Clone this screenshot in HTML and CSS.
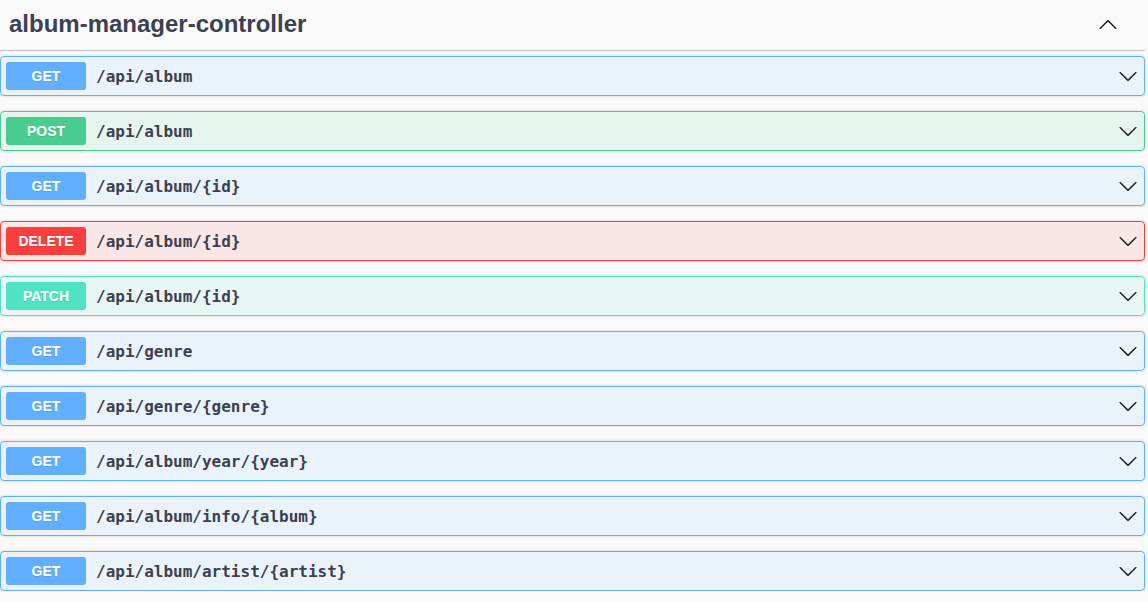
FILE: index.html
```html
<!DOCTYPE html>
<html>
<head>
<meta charset="utf-8">
<link rel="stylesheet" href="styles.css">
</head>
<body>
<div class="tag">
  <div class="tag-header">
    <h4 class="tag-title">album-manager-controller</h4>
    <svg class="tag-arrow" width="20" height="20" viewBox="0 0 20 20"><path d="M17.418 14.908c.272.268.709.268.979 0s.271-.701 0-.969l-7.908-7.83c-.27-.268-.707-.268-.979 0l-7.908 7.83c-.27.268-.27.701 0 .969.271.268.709.268.979 0L10 7.767l7.418 7.141z"/></svg>
  </div>
  <div class="ops">
    <div class="op get"><span class="method">GET</span><span class="path">/api/album</span><svg class="arrow" width="20" height="20" viewBox="0 0 20 20"><path d="M17.418 6.109c.272-.268.709-.268.979 0s.271.701 0 .969l-7.908 7.83c-.27.268-.707.268-.979 0l-7.908-7.83c-.27-.268-.27-.701 0-.969.271-.268.709-.268.979 0L10 13.25l7.418-7.141z"/></svg></div>
    <div class="op post"><span class="method">POST</span><span class="path">/api/album</span><svg class="arrow" width="20" height="20" viewBox="0 0 20 20"><path d="M17.418 6.109c.272-.268.709-.268.979 0s.271.701 0 .969l-7.908 7.83c-.27.268-.707.268-.979 0l-7.908-7.83c-.27-.268-.27-.701 0-.969.271-.268.709-.268.979 0L10 13.25l7.418-7.141z"/></svg></div>
    <div class="op get"><span class="method">GET</span><span class="path">/api/album/{id}</span><svg class="arrow" width="20" height="20" viewBox="0 0 20 20"><path d="M17.418 6.109c.272-.268.709-.268.979 0s.271.701 0 .969l-7.908 7.83c-.27.268-.707.268-.979 0l-7.908-7.830c-.27-.268-.27-.701 0-.969.271-.268.709-.268.979 0L10 13.25l7.418-7.141z"/></svg></div>
    <div class="op delete"><span class="method">DELETE</span><span class="path">/api/album/{id}</span><svg class="arrow" width="20" height="20" viewBox="0 0 20 20"><path d="M17.418 6.109c.272-.268.709-.268.979 0s.271.701 0 .969l-7.908 7.83c-.27.268-.707.268-.979 0l-7.908-7.83c-.27-.268-.27-.701 0-.969.271-.268.709-.268.979 0L10 13.25l7.418-7.141z"/></svg></div>
    <div class="op patch"><span class="method">PATCH</span><span class="path">/api/album/{id}</span><svg class="arrow" width="20" height="20" viewBox="0 0 20 20"><path d="M17.418 6.109c.272-.268.709-.268.979 0s.271.701 0 .969l-7.908 7.83c-.27.268-.707.268-.979 0l-7.908-7.83c-.27-.268-.27-.701 0-.969.271-.268.709-.268.979 0L10 13.25l7.418-7.141z"/></svg></div>
    <div class="op get"><span class="method">GET</span><span class="path">/api/genre</span><svg class="arrow" width="20" height="20" viewBox="0 0 20 20"><path d="M17.418 6.109c.272-.268.709-.268.979 0s.271.701 0 .969l-7.908 7.83c-.27.268-.707.268-.979 0l-7.908-7.83c-.27-.268-.27-.701 0-.969.271-.268.709-.268.979 0L10 13.25l7.418-7.141z"/></svg></div>
    <div class="op get"><span class="method">GET</span><span class="path">/api/genre/{genre}</span><svg class="arrow" width="20" height="20" viewBox="0 0 20 20"><path d="M17.418 6.109c.272-.268.709-.268.979 0s.271.701 0 .969l-7.908 7.83c-.27.268-.707.268-.979 0l-7.908-7.83c-.27-.268-.27-.701 0-.969.271-.268.709-.268.979 0L10 13.25l7.418-7.141z"/></svg></div>
    <div class="op get"><span class="method">GET</span><span class="path">/api/album/year/{year}</span><svg class="arrow" width="20" height="20" viewBox="0 0 20 20"><path d="M17.418 6.109c.272-.268.709-.268.979 0s.271.701 0 .969l-7.908 7.83c-.27.268-.707.268-.979 0l-7.908-7.83c-.27-.268-.27-.701 0-.969.271-.268.709-.268.979 0L10 13.25l7.418-7.141z"/></svg></div>
    <div class="op get"><span class="method">GET</span><span class="path">/api/album/info/{album}</span><svg class="arrow" width="20" height="20" viewBox="0 0 20 20"><path d="M17.418 6.109c.272-.268.709-.268.979 0s.271.701 0 .969l-7.908 7.83c-.27.268-.707.268-.979 0l-7.908-7.83c-.27-.268-.27-.701 0-.969.271-.268.709-.268.979 0L10 13.25l7.418-7.141z"/></svg></div>
    <div class="op get"><span class="method">GET</span><span class="path">/api/album/artist/{artist}</span><svg class="arrow" width="20" height="20" viewBox="0 0 20 20"><path d="M17.418 6.109c.272-.268.709-.268.979 0s.271.701 0 .969l-7.908 7.83c-.27.268-.707.268-.979 0l-7.908-7.83c-.27-.268-.27-.701 0-.969.271-.268.709-.268.979 0L10 13.25l7.418-7.141z"/></svg></div>
  </div>
</div>
</body>
</html>
```

FILE: styles.css
```css
html, body {
  margin: 0;
  padding: 0;
  background: #fafafa;
}
body {
  font-family: "Liberation Sans", Arial, sans-serif;
  color: #3b4151;
}
.tag {
  width: 1145px;
}
.tag-header {
  height: 51px;
  box-sizing: border-box;
  display: flex;
  align-items: center;
  justify-content: space-between;
  padding: 0 27px 2px 9px;
  border-bottom: 1px solid rgba(59, 65, 81, 0.3);
  margin-bottom: 5px;
}
.tag-title {
  margin: 0;
  font-size: 24px;
  font-weight: 700;
  color: #3b4151;
}
.tag-arrow {
  display: block;
  fill: #222;
}
.ops {
  display: flex;
  flex-direction: column;
  gap: 15px;
}
.op {
  display: flex;
  align-items: center;
  padding: 5px;
  border: 1px solid;
  border-radius: 4px;
  box-shadow: 0 0 3px rgba(0, 0, 0, 0.19);
}
.method {
  width: 80px;
  height: 28px;
  line-height: 28px;
  border-radius: 3px;
  text-align: center;
  color: #fff;
  font-size: 14px;
  font-weight: 700;
  text-shadow: 0 1px 0 rgba(0, 0, 0, 0.1);
  flex-shrink: 0;
}
.path {
  flex: 1;
  padding: 0 10px;
  font-family: "DejaVu Sans Mono", monospace;
  font-size: 16px;
  font-weight: 700;
  color: #3b4151;
}
.arrow {
  display: block;
  margin-right: 1px;
  fill: #222;
}
.get { background: rgba(97, 175, 254, 0.1); border-color: #61affe; }
.get .method { background: #61affe; }
.post { background: rgba(73, 204, 144, 0.1); border-color: #49cc90; }
.post .method { background: #49cc90; }
.delete { background: rgba(249, 62, 62, 0.1); border-color: #f93e3e; }
.delete .method { background: #f93e3e; }
.patch { background: rgba(80, 227, 194, 0.1); border-color: #50e3c2; }
.patch .method { background: #50e3c2; }
```
